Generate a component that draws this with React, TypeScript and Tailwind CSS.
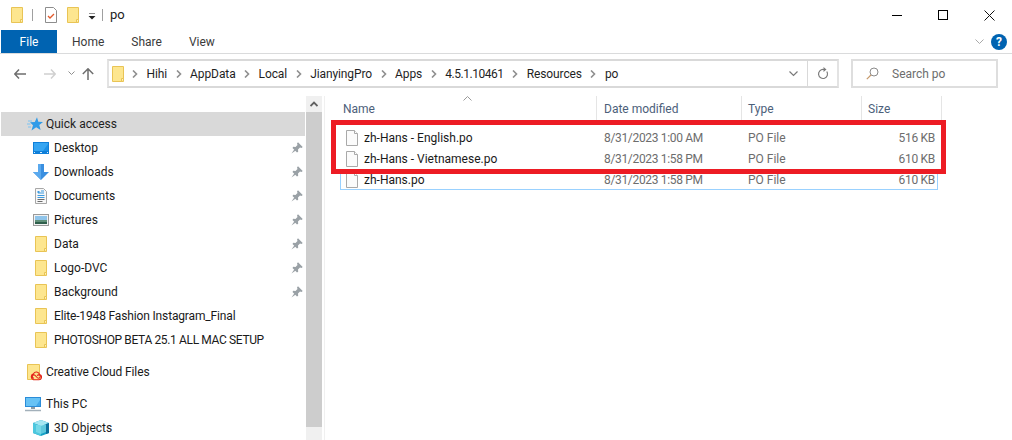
// File Explorer window showing the po folder

import React from 'react';

const FolderIcon = ({ className = '' }: { className?: string }) => (
  <svg width="14" height="18" viewBox="0 0 14 18" className={className}>
    <path d="M1.500 1.500h11v15h-11z" fill="#fde68f" stroke="#e9c455" />
    <path d="M10.500 16.500v-3h2" fill="#fff4c4" stroke="#e9c455" />
  </svg>
);

const FileIcon = () => (
  <svg width="14" height="16" viewBox="0 0 14 16">
    <path d="M1.500.500h8l3 3v12h-11z" fill="#fbfbfb" stroke="#a9a9a9" />
    <path d="M9.500.500v3h3" fill="#fff" stroke="#a9a9a9" />
  </svg>
);

const PinIcon = () => (
  <svg width="12" height="12" viewBox="0 0 12 12">
    <path d="M7 0.300 11.700 5 10.500 6 9 5.500 7 7.500 7.200 9.800 6 10.500 1.500 6 2.200 4.800 4.500 5 6.500 3 6 1.500z" fill="#9aa1a6" />
    <path d="M3.400 7.200 0.500 11.500 4.800 8.600z" fill="#9aa1a6" />
  </svg>
);

const QuickAccessIcon = () => (
  <svg width="16" height="14" viewBox="0 0 16 14">
    <path d="M10 .2 11.300 4.800 16 5l-3.700 3 1.300 5L9.200 10.200 4.500 13.500 6 8.300 3 5.300l4.800-.3z" fill="#2f9be8" />
    <path d="M1 4h4M0 7h3.500M1 10h3" stroke="#7cc3f2" strokeWidth="1" />
  </svg>
);

const DesktopIcon = () => (
  <svg width="16" height="12" viewBox="0 0 16 12">
    <rect width="16" height="12" fill="#0f7fd9" />
    <path d="M1 1h14v8H1z" fill="#35a5f2" />
    <path d="M1 9 10 9 15 2V9z" fill="#1a8fe6" />
    <path d="M1 10.500h1M7 10.500h2M14 10.500h1" stroke="#d7eeff" />
  </svg>
);

const DownloadsIcon = () => (
  <svg width="16" height="16" viewBox="0 0 16 16">
    <path d="M5 0h6v8h5l-8 8-8-8h5z" fill="#3a8fe0" />
    <path d="M5 0h3v16L0 8h5z" fill="#5aa9ee" />
  </svg>
);

const DocumentsIcon = () => (
  <svg width="12" height="16" viewBox="0 0 12 16">
    <path d="M.500.500h8l3 3v12H.500z" fill="#f7f7f7" stroke="#a7a7a7" />
    <path d="M6 3h3M3 5h6M2.500 7.500h7M2.500 9.500h7" stroke="#3d9be0" />
    <path d="M2.500 11.500h7M2.500 13.500h5" stroke="#6c6c6c" />
    <path d="M2.500 3h2v2h-2z" fill="#3d9be0" />
  </svg>
);

const PicturesIcon = () => (
  <svg width="16" height="12" viewBox="0 0 16 12">
    <rect x=".5" y=".5" width="15" height="11" fill="#f2f2f2" stroke="#9a9a9a" />
    <rect x="2" y="2" width="12" height="4" fill="#8fc4ea" />
    <rect x="2" y="6" width="12" height="2" fill="#5f8f78" />
    <rect x="2" y="8" width="12" height="2" fill="#2f5f4c" />
  </svg>
);

const CreativeCloudIcon = () => (
  <svg width="15" height="17" viewBox="0 0 15 17">
    <path d="M.500.500h12v15H.500z" fill="#fde68f" stroke="#e9c455" />
    <path
      d="M6.500 15.800h5.500a2.700 2.700 0 0 0 .6-5.300 3.300 3.300 0 0 0-6.100-.8 3.200 3.200 0 0 0 0 6.100zM7 14.300a1.700 1.700 0 0 1 0-3.400c1.800 0 2.600 3.400 4.600 3.400a1.700 1.700 0 0 0 0-3.400 1.800 1.800 0 0 0-1.500.8"
      fill="#fde68f"
      stroke="#e3241b"
      strokeWidth="1.100"
    />
  </svg>
);

const ThisPcIcon = () => (
  <svg width="16" height="15" viewBox="0 0 16 15">
    <rect width="16" height="10" fill="#2b8cd8" />
    <rect x="1" y="1" width="14" height="8" fill="#67c2f5" />
    <path d="M1 9 11 9 15 3V9z" fill="#41a7ea" />
    <path d="M6 10h4v2H6z" fill="#8c9aa5" />
    <path d="M0 13.500h16" stroke="#a3b0ba" strokeWidth="1.500" />
  </svg>
);

const CubeIcon = () => (
  <svg width="16" height="16" viewBox="0 0 16 16">
    <path d="M8 0 16 3v10l-8 3-8-3V3z" fill="#15a0c4" />
    <path d="M8 0 16 3 8 6 0 3z" fill="#a5e6f2" />
    <path d="M0 3 8 6v10l-8-3z" fill="#4cc7de" />
    <path d="M3 5 13 5 13 12 8 14 3 12z" fill="#8fe3ee" opacity=".6" />
    <path d="M16 3v10l-3 1V4z" fill="#0b6f9c" />
  </svg>
);

const ChevronCrumb = () => (
  <svg width="6" height="8" viewBox="0 0 6 8" className="shrink-0">
    <path d="M1 .5 4.500 4 1 7.500" fill="none" stroke="#8f8f8f" strokeWidth="1.600" />
  </svg>
);

const crumbs = ['Hihi', 'AppData', 'Local', 'JianyingPro', 'Apps', '4.5.1.10461', 'Resources', 'po'];

const quickLinks = [
  { name: 'Desktop', icon: <DesktopIcon />, pinned: true, tracking: '' },
  { name: 'Downloads', icon: <DownloadsIcon />, pinned: true, tracking: '' },
  { name: 'Documents', icon: <DocumentsIcon />, pinned: true, tracking: '' },
  { name: 'Pictures', icon: <PicturesIcon />, pinned: true, tracking: '' },
  { name: 'Data', icon: <FolderIcon />, pinned: true, tracking: '' },
  { name: 'Logo-DVC', icon: <FolderIcon />, pinned: true, tracking: '' },
  { name: 'Background', icon: <FolderIcon />, pinned: true, tracking: '' },
  { name: 'Elite-1948 Fashion Instagram_Final', icon: <FolderIcon />, pinned: false, tracking: 'tracking-[-0.15px]' },
  { name: 'PHOTOSHOP BETA 25.1 ALL MAC SETUP', icon: <FolderIcon />, pinned: false, tracking: 'tracking-[-0.36px]' }
];

const files = [
  { name: 'zh-Hans - English.po', date: '8/31/2023 1:00 AM', size: '516 KB' },
  { name: 'zh-Hans - Vietnamese.po', date: '8/31/2023 1:58 PM', size: '610 KB' },
  { name: 'zh-Hans.po', date: '8/31/2023 1:58 PM', size: '610 KB' }
];

export default function App() {
  return (
    <div className="w-[1012px] h-[440px] overflow-hidden bg-white flex flex-col text-[12px] text-[#1a1a1a] font-['Roboto',sans-serif]">
      {/* Title bar */}
      <div className="h-[30px] flex items-center shrink-0">
        <div className="flex items-center pl-[10px]">
          <FolderIcon />
          <div className="w-px h-[12px] bg-[#a0a0a0] ml-[8px]" />
          <svg width="14" height="16" viewBox="0 0 14 16" className="ml-[11px]">
            <path d="M1.500.500h8l3 3v12h-11z" fill="#fff" stroke="#8d8d8d" />
            <path d="M4 9l2 2 4-4" fill="none" stroke="#e2582a" strokeWidth="1.300" />
          </svg>
          <FolderIcon className="ml-[8px]" />
          <svg width="8" height="7" viewBox="0 0 8 7" className="ml-[8px] mt-[2px]">
            <path d="M1 0h6" stroke="#222" />
            <path d="M0.500 3h7L4 6.500z" fill="#222" />
          </svg>
          <div className="w-px h-[12px] bg-[#a0a0a0] ml-[6px]" />
          <span className="ml-[7px] text-[13px] text-[#222]">po</span>
        </div>
        <div className="ml-auto flex items-center">
          <div className="w-[46px] flex justify-center"><div className="w-[10px] h-px bg-black" /></div>
          <div className="w-[46px] flex justify-center"><div className="w-[10px] h-[10px] border border-black" /></div>
          <div className="w-[46px] flex justify-center">
            <svg width="11" height="11" viewBox="0 0 11 11">
              <path d="M.5.500l10 10M10.500.500l-10 10" stroke="#111" />
            </svg>
          </div>
        </div>
      </div>

      {/* Ribbon tabs */}
      <div className="h-[24px] shrink-0 flex items-stretch border-b border-[#dadbdc] pl-px">
        <div className="w-[56px] bg-[#0063b1] text-white flex items-center justify-center">File</div>
        <div className="flex items-center pl-[15px] gap-[27px] text-[#3b3b3b]">
          <span>Home</span>
          <span>Share</span>
          <span>View</span>
        </div>
        <div className="ml-auto flex items-center pr-[5px] gap-[7px]">
          <svg width="9" height="6" viewBox="0 0 9 6">
            <path d="M.5.500l4 4 4-4" fill="none" stroke="#a9a9a9" />
          </svg>
          <div className="w-[16px] h-[16px] rounded-full bg-[#0063b1] text-white flex items-center justify-center text-[12px] font-bold">?</div>
        </div>
      </div>

      {/* Address row */}
      <div className="h-[42px] shrink-0 flex items-center pt-[5px] pb-[8px]">
        <div className="w-[107px] flex items-center pl-[14px] shrink-0">
          <svg width="12" height="10" viewBox="0 0 12 10">
            <path d="M5 .5.800 5 5 9.500M1 5h11" fill="none" stroke="#6e6e6e" strokeWidth="1.500" />
          </svg>
          <svg width="12" height="10" viewBox="0 0 12 10" className="ml-[18px]">
            <path d="M7 .5 11.200 5 7 9.500M0 5h11" fill="none" stroke="#d0d0d0" strokeWidth="1.500" />
          </svg>
          <svg width="7" height="5" viewBox="0 0 7 5" className="ml-[12px]">
            <path d="M.5.500 3.500 3.500 6.500.500" fill="none" stroke="#8f8f8f" />
          </svg>
          <svg width="12" height="12" viewBox="0 0 12 12" className="ml-[7px]">
            <path d="M.8 6 6 .8 11.200 6M6 1v11" fill="none" stroke="#6e6e6e" strokeWidth="1.500" />
          </svg>
        </div>
        <div className="w-[732px] h-[29px] border-2 border-[#d9d9d9] border-x-[#e3e3e3] flex items-center shrink-0">
          <FolderIcon className="ml-[2px] mr-[7px]" />
          <div className="flex items-center gap-[8.500px] tracking-[-0.1px]">
            {crumbs.map((c) => (
              <React.Fragment key={c}>
                <ChevronCrumb />
                <span className={c === '4.5.1.10461' ? 'text-[#1f1f1f] tracking-[-0.45px]' : 'text-[#1f1f1f]'}>{c}</span>
              </React.Fragment>
            ))}
          </div>
          <div className="ml-auto flex items-center h-full">
            <svg width="9" height="6" viewBox="0 0 9 6" className="mr-[9px]">
              <path d="M.5.500l4 4 4-4" fill="none" stroke="#7a7a7a" strokeWidth="1.200" />
            </svg>
            <div className="w-[30px] h-full border-l border-[#d9d9d9] flex items-center justify-center">
              <svg width="12" height="13" viewBox="0 0 12 13">
                <path d="M9.800 4.500a4.500 4.500 0 1 1-3.300-2H8" fill="none" stroke="#7a7a7a" strokeWidth="1.200" />
                <path d="M6.500 0 9.500 2.500 6.500 5z" fill="#7a7a7a" />
              </svg>
            </div>
          </div>
        </div>
        <div className="ml-[12px] w-[147px] h-[29px] border-2 border-[#dedede] flex items-center shrink-0 pl-[13px]">
          <svg width="13" height="13" viewBox="0 0 13 13">
            <circle cx="8" cy="5" r="4" fill="none" stroke="#8a8a8a" />
            <path d="M5 8 .8 12.200" stroke="#c79a6b" strokeWidth="1.200" />
          </svg>
          <span className="ml-[13px] text-[#6d6d6d]">Search po</span>
        </div>
      </div>

      {/* Body */}
      <div className="flex-1 flex min-h-0">
        {/* Navigation pane */}
        <div className="w-[306px] shrink-0 pt-[16px] pl-px pr-px">
          <div className="h-[24px] bg-[#d9d9d9] flex items-center pl-[26px]">
            <QuickAccessIcon />
            <span className="ml-[3px] text-[#1f1f1f]">Quick access</span>
          </div>
          {quickLinks.map((l) => (
            <div key={l.name} className="h-[24px] flex items-center">
              <div className="w-[16px] ml-[32px] flex justify-center shrink-0">{l.icon}</div>
              <span className={`ml-[5px] whitespace-nowrap ${l.tracking}`}>{l.name}</span>
              {l.pinned && <div className="ml-auto mr-[2px] flex"><PinIcon /></div>}
            </div>
          ))}
          <div className="h-[24px] mt-[8px] flex items-center pl-[26px]">
            <CreativeCloudIcon />
            <span className="ml-[4px] tracking-[-0.1px]">Creative Cloud Files</span>
          </div>
          <div className="h-[24px] mt-[8px] flex items-center pl-[24px]">
            <ThisPcIcon />
            <span className="ml-[5px]">This PC</span>
          </div>
          <div className="h-[24px] flex items-center pl-[32px]">
            <CubeIcon />
            <span className="ml-[5px]">3D Objects</span>
          </div>
        </div>

        {/* Nav scrollbar */}
        <div className="w-[16px] shrink-0 bg-[#f0f0f0] flex flex-col">
          <div className="h-[16px] flex items-center justify-center">
            <svg width="8" height="6" viewBox="0 0 8 6">
              <path d="M.5 5 4 1.500 7.500 5" fill="none" stroke="#606060" strokeWidth="1.800" />
            </svg>
          </div>
          <div className="h-[315px] bg-[#cdcdcd]" />
        </div>

        {/* File list */}
        <div className="relative flex-1 border-l border-[#f0f0f0] ml-[2px]">
          <div className="h-[24px] flex ml-[12px] text-[#4c607a]">
            <div className="w-[260px] border-r border-[#e5e5e5] pl-[6px] pt-[2px] flex items-center relative">
              Name
              <svg width="9" height="5" viewBox="0 0 9 5" className="absolute left-[126px] top-0">
                <path d="M.5 4.500l4-4 4 4" fill="none" stroke="#9a9a9a" />
              </svg>
            </div>
            <div className="w-[145px] border-r border-[#e5e5e5] pl-[7px] pt-[2px] flex items-center">Date modified</div>
            <div className="w-[120px] border-r border-[#e5e5e5] pl-[6px] pt-[2px] flex items-center">Type</div>
            <div className="w-[80px] border-r border-[#e5e5e5] pl-[6px] pt-[2px] flex items-center">Size</div>
          </div>
          <div className="pt-[7px] ml-[15px] w-[598px]">
            {files.map((f, i) => (
              <div
                key={f.name}
                className={`h-[21px] flex items-center border ${i === 2 ? 'border-[#99d1ff]' : 'border-transparent'}`}
              >
                <div className="w-[263px] flex items-center pl-[4px] shrink-0">
                  <FileIcon />
                  <span className="ml-[5px] text-[#1a1a1a]">{f.name}</span>
                </div>
                <div className="w-[144px] shrink-0 text-[#6d6d6d] tracking-[-0.33px]">{f.date}</div>
                <div className="flex-1 text-[#6d6d6d]">PO File</div>
                <div className="pr-[2px] text-[#6d6d6d] tracking-[-0.3px]">{f.size}</div>
              </div>
            ))}
          </div>
          {/* Red highlight drawn over the list */}
          <div className="absolute left-[6px] top-[24px] w-[615px] h-[54px] border-[5px] border-[#ed1c24]" />
        </div>
      </div>
    </div>
  );
}
